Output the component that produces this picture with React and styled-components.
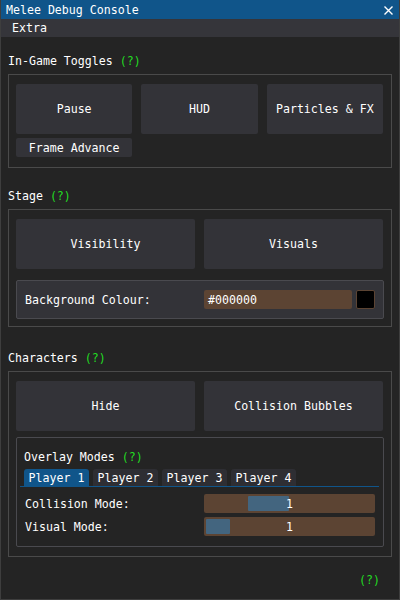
import React from "react";
import styled, { createGlobalStyle } from "styled-components";

const GlobalStyle = createGlobalStyle`
  html, body {
    margin: 0;
    padding: 0;
    background: #242424;
  }
  * {
    box-sizing: border-box;
  }
`;

const Window = styled.div`
  width: 400px;
  height: 600px;
  background: #242424;
  border: 1px solid #3e3e3e;
  border-top: none;
  display: flex;
  flex-direction: column;
  font-family: "DejaVu Sans Mono", "Liberation Mono", monospace;
  font-size: 11.6px;
  line-height: 13px;
  color: #ffffff;
  overflow: hidden;
`;

const TitleBar = styled.div`
  height: 19px;
  background: #10558a;
  display: flex;
  align-items: center;
  justify-content: space-between;
  padding: 1px 6px 0 5px;
`;

const MenuBar = styled.div`
  height: 18px;
  background: #35353a;
  display: flex;
  align-items: center;
  padding: 1px 0 0 11px;
`;

const Content = styled.div`
  flex: 1;
  display: flex;
  flex-direction: column;
  padding: 0 7px;
`;

const Heading = styled.div`
  margin-top: ${(p) => p.top}px;
  margin-bottom: ${(p) => (p.bottom === undefined ? 6 : p.bottom)}px;
  height: 13px;
  white-space: pre;
`;

const Help = styled.span`
  color: #22dd22;
`;

const Group = styled.div`
  border: 1px solid #4a4a4a;
  padding: 9px 8px ${(p) => p.bottom}px 7px;
  display: flex;
  flex-direction: column;
`;

const ButtonGrid = styled.div`
  display: grid;
  grid-template-columns: repeat(${(p) => p.cols}, 1fr);
  column-gap: 9px;
  row-gap: 4px;
`;

const Button = styled.div`
  height: ${(p) => (p.small ? 19 : 50)}px;
  background: #333338;
  border-radius: 2px;
  display: flex;
  align-items: center;
  justify-content: center;
  padding-top: 1px;
  white-space: pre;
`;

const Frame = styled.div`
  margin-top: ${(p) => p.top}px;
  margin-right: -1px;
  border: 1px solid #4a4a4f;
  border-radius: 2px;
  background: ${(p) => (p.filled ? "#333338" : "transparent")};
  padding: 9px 8px ${(p) => p.bottom}px 7px;
  display: flex;
  flex-direction: column;
  gap: 4px;
`;

const Row = styled.div`
  display: flex;
  align-items: center;
  height: 19px;
`;

const Label = styled.div`
  width: 180px;
  padding: 1px 0 0 1px;
  white-space: pre;
`;

const Input = styled.div`
  width: 148px;
  height: 19px;
  background: #5c4433;
  border-radius: 2px;
  display: flex;
  align-items: center;
  padding: 1px 0 0 4px;
`;

const Swatch = styled.div`
  width: 19px;
  height: 19px;
  margin-left: 4px;
  background: ${(p) => p.color};
  border: 1px solid #5c4433;
  border-radius: 2px;
`;

const Slider = styled.div`
  position: relative;
  width: 171px;
  height: 19px;
  background: #5c4433;
  border-radius: 2px;
  display: flex;
  align-items: center;
  justify-content: center;
  padding-top: 1px;
`;

const Grab = styled.div`
  position: absolute;
  top: 2px;
  bottom: 2px;
  background: #43657f;
  border-radius: 1px;
`;

const SliderValue = styled.span`
  position: relative;
`;

const Tabs = styled.div`
  display: flex;
  gap: 4px;
  margin: 1px -4px 3px -4px;
  padding-left: 4px;
  border-bottom: 1px solid #10558a;
`;

const Tab = styled.div`
  width: 65px;
  height: 17px;
  border-radius: 3px 3px 0 0;
  background: ${(p) => (p.active ? "#10558a" : "#2e2e33")};
  display: flex;
  align-items: center;
  justify-content: center;
  padding-top: 1px;
  white-space: pre;
`;

const Footer = styled.div`
  display: flex;
  justify-content: flex-end;
  padding-right: 12px;
  margin-top: 17px;
`;

const CloseIcon = () => (
  <svg width="9" height="9" viewBox="0 0 9 9">
    <path d="M0.5 0.5 L8.5 8.5 M8.5 0.5 L0.5 8.5" stroke="#ffffff" strokeWidth="1.4" />
  </svg>
);

function ModeSlider({ label, value, left, width }) {
  return (
    <Row>
      <Label>{label}</Label>
      <Slider>
        <Grab style={{ left, width }} />
        <SliderValue>{value}</SliderValue>
      </Slider>
    </Row>
  );
}

export default function App() {
  return (
    <>
      <GlobalStyle />
      <Window>
        <TitleBar>
          <span>Melee Debug Console</span>
          <CloseIcon />
        </TitleBar>
        <MenuBar>Extra</MenuBar>
        <Content>
          <Heading top={18}>
            In-Game Toggles <Help>(?)</Help>
          </Heading>
          <Group bottom={10}>
            <ButtonGrid cols={3}>
              <Button>Pause</Button>
              <Button>HUD</Button>
              <Button>Particles &amp; FX</Button>
              <Button small>Frame Advance</Button>
            </ButtonGrid>
          </Group>

          <Heading top={22}>
            Stage <Help>(?)</Help>
          </Heading>
          <Group bottom={7}>
            <ButtonGrid cols={2}>
              <Button>Visibility</Button>
              <Button>Visuals</Button>
            </ButtonGrid>
            <Frame filled top={11} bottom={9}>
              <Row>
                <Label>Background Colour:</Label>
                <Input>#000000</Input>
                <Swatch color="#000000" />
              </Row>
            </Frame>
          </Group>

          <Heading top={25}>
            Characters <Help>(?)</Help>
          </Heading>
          <Group bottom={9}>
            <ButtonGrid cols={2}>
              <Button>Hide</Button>
              <Button>Collision Bubbles</Button>
            </ButtonGrid>
            <Frame top={6} bottom={10}>
              <Heading top={4} bottom={0}>
                Overlay Modes <Help>(?)</Help>
              </Heading>
              <Tabs>
                <Tab active>Player 1</Tab>
                <Tab>Player 2</Tab>
                <Tab>Player 3</Tab>
                <Tab>Player 4</Tab>
              </Tabs>
              <ModeSlider label="Collision Mode:" value="1" left={44} width={41} />
              <ModeSlider label="Visual Mode:" value="1" left={2} width={24} />
            </Frame>
          </Group>

          <Footer>
            <Help>(?)</Help>
          </Footer>
        </Content>
      </Window>
    </>
  );
}
